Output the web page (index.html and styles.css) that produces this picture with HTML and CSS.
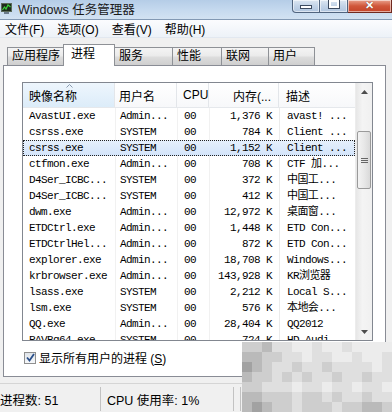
FILE: index.html
```html
<!DOCTYPE html>
<html lang="zh-CN">
<head>
  <meta charset="UTF-8" />
  <title>Windows 任务管理器</title>
  <link rel="stylesheet" href="styles.css">
</head>
<body>
  <div class="window">
    <!-- Title bar -->
    <div class="titlebar">
      <span class="app-icon">
        <svg width="11" height="11" viewBox="0 0 11 11">
          <rect x="0.5" y="0.5" width="10" height="8" fill="#1d2a1d" stroke="#5a6a5a"/>
          <polyline points="1.5,7 3.5,4 5,6 7,2 9.5,4" fill="none" stroke="#39d43a" stroke-width="1.2"/>
          <rect x="3" y="9" width="5" height="2" fill="#6b7b8c"/>
        </svg>
      </span>
      <span class="title">Windows 任务管理器</span>
      <div class="caption-btns">
        <span class="cbtn min"><i></i></span>
        <span class="cbtn max"><i></i></span>
        <span class="cbtn close">✕</span>
      </div>
    </div>

    <!-- Menu -->
    <div class="menubar">
      <span>文件(F)</span>
      <span>选项(O)</span>
      <span>查看(V)</span>
      <span>帮助(H)</span>
    </div>

    <div class="client">
      <div class="tabs">
        <span class="tab">应用程序</span>
        <span class="tab active">进程</span>
        <span class="tab">服务</span>
        <span class="tab">性能</span>
        <span class="tab">联网</span>
        <span class="tab">用户</span>
      </div>

      <div class="panel">
        <div class="listview">
          <div class="lv-main">
            <div class="lv-head">
              <span class="c-name sorted">
                <svg class="sort-arrow" width="7" height="4" viewBox="0 0 7 4"><polyline points="0.5,3.5 3.5,0.5 6.5,3.5" fill="none" stroke="#8a9bb0" stroke-width="1"/></svg>
                映像名称
              </span>
              <span class="c-user">用户名</span>
              <span class="c-cpu">CPU</span>
              <span class="c-mem">内存(...</span>
              <span class="c-desc">描述</span>
            </div>
            <div class="lv-body">
              <div class="row"><span class="c-name">AvastUI.exe</span><span class="c-user">Admin...</span><span class="c-cpu">00</span><span class="c-mem">1,376 K</span><span class="c-desc">avast! ...</span></div>
              <div class="row"><span class="c-name">csrss.exe</span><span class="c-user">SYSTEM</span><span class="c-cpu">00</span><span class="c-mem">784 K</span><span class="c-desc">Client ...</span></div>
              <div class="row selected"><span class="c-name">csrss.exe</span><span class="c-user">SYSTEM</span><span class="c-cpu">00</span><span class="c-mem">1,152 K</span><span class="c-desc">Client ...</span></div>
              <div class="row"><span class="c-name">ctfmon.exe</span><span class="c-user">Admin...</span><span class="c-cpu">00</span><span class="c-mem">708 K</span><span class="c-desc">CTF 加...</span></div>
              <div class="row"><span class="c-name">D4Ser_ICBC...</span><span class="c-user">SYSTEM</span><span class="c-cpu">00</span><span class="c-mem">372 K</span><span class="c-desc">中国工...</span></div>
              <div class="row"><span class="c-name">D4Ser_ICBC...</span><span class="c-user">SYSTEM</span><span class="c-cpu">00</span><span class="c-mem">412 K</span><span class="c-desc">中国工...</span></div>
              <div class="row"><span class="c-name">dwm.exe</span><span class="c-user">Admin...</span><span class="c-cpu">00</span><span class="c-mem">12,972 K</span><span class="c-desc">桌面窗...</span></div>
              <div class="row"><span class="c-name">ETDCtrl.exe</span><span class="c-user">Admin...</span><span class="c-cpu">00</span><span class="c-mem">1,448 K</span><span class="c-desc">ETD Con...</span></div>
              <div class="row"><span class="c-name">ETDCtrlHel...</span><span class="c-user">Admin...</span><span class="c-cpu">00</span><span class="c-mem">872 K</span><span class="c-desc">ETD Con...</span></div>
              <div class="row"><span class="c-name">explorer.exe</span><span class="c-user">Admin...</span><span class="c-cpu">00</span><span class="c-mem">18,708 K</span><span class="c-desc">Windows...</span></div>
              <div class="row"><span class="c-name">krbrowser.exe</span><span class="c-user">Admin...</span><span class="c-cpu">00</span><span class="c-mem">143,928 K</span><span class="c-desc">KR浏览器</span></div>
              <div class="row"><span class="c-name">lsass.exe</span><span class="c-user">SYSTEM</span><span class="c-cpu">00</span><span class="c-mem">2,212 K</span><span class="c-desc">Local S...</span></div>
              <div class="row"><span class="c-name">lsm.exe</span><span class="c-user">SYSTEM</span><span class="c-cpu">00</span><span class="c-mem">576 K</span><span class="c-desc">本地会...</span></div>
              <div class="row"><span class="c-name">QQ.exe</span><span class="c-user">Admin...</span><span class="c-cpu">00</span><span class="c-mem">28,404 K</span><span class="c-desc">QQ2012</span></div>
              <div class="row"><span class="c-name">RAVBg64.exe</span><span class="c-user">SYSTEM</span><span class="c-cpu">00</span><span class="c-mem">724 K</span><span class="c-desc">HD Audi...</span></div>
            </div>
          </div>
          <div class="scrollbar">
            <span class="sb-btn"><svg width="7" height="4" viewBox="0 0 7 4"><polygon points="0,4 3.5,0 7,4" fill="#4d4d4d"/></svg></span>
            <span class="sb-gap"></span>
            <span class="sb-thumb"><i></i><i></i><i></i></span>
            <span class="sb-track"></span>
            <span class="sb-btn"><svg width="7" height="4" viewBox="0 0 7 4"><polygon points="0,0 7,0 3.5,4" fill="#4d4d4d"/></svg></span>
          </div>
        </div>

        <label class="showall">
          <span class="chk">
            <svg width="9" height="9" viewBox="0 0 9 9"><polyline points="1,4.5 3.5,7.5 8,1" fill="none" stroke="#2a4f8a" stroke-width="1.8"/></svg>
          </span>
          <span class="showall-text">显示所有用户的进程 (<u>S</u>)</span>
        </label>
      </div>

      <div class="statusbar">
        <span class="sb-cell first">进程数: 51</span>
        <span class="sb-cell second">CPU 使用率: 1%</span>
        <span class="sb-cell"></span>
      </div>
    </div>

    <!-- pixelated watermark -->
    <div class="mosaic">
      <i class="c"></i><i class="c"></i><i class="b"></i><i class="d"></i><i class="d"></i><i class="e"></i><i class="e"></i><i class="d"></i><i class="e"></i><i class="e"></i><i class="d"></i><i class="e"></i><i class="e"></i><i class="e"></i><i class="e"></i>
      <i class="b"></i><i class="b"></i><i class="c"></i><i class="c"></i><i class="d"></i><i class="d"></i><i class="e"></i><i class="d"></i><i class="d"></i><i class="e"></i><i class="e"></i><i class="d"></i><i class="e"></i><i class="e"></i><i class="d"></i>
      <i class="a"></i><i class="b"></i><i class="c"></i><i class="d"></i><i class="d"></i><i class="c"></i><i class="d"></i><i class="d"></i><i class="c"></i><i class="d"></i><i class="d"></i><i class="d"></i><i class="d"></i><i class="e"></i><i class="d"></i>
      <i class="b"></i><i class="c"></i><i class="c"></i><i class="d"></i><i class="c"></i><i class="d"></i><i class="c"></i><i class="d"></i><i class="d"></i><i class="c"></i><i class="d"></i><i class="d"></i><i class="c"></i><i class="d"></i><i class="d"></i>
      <i class="c"></i><i class="c"></i><i class="d"></i><i class="d"></i><i class="d"></i><i class="e"></i><i class="d"></i><i class="d"></i><i class="e"></i><i class="d"></i><i class="d"></i><i class="e"></i><i class="d"></i><i class="d"></i><i class="e"></i>
      <i class="b"></i><i class="b"></i><i class="c"></i><i class="c"></i><i class="c"></i><i class="d"></i><i class="c"></i><i class="c"></i><i class="d"></i><i class="c"></i><i class="d"></i><i class="d"></i><i class="c"></i><i class="d"></i><i class="d"></i>
      <i class="b"></i><i class="a"></i><i class="b"></i><i class="c"></i><i class="c"></i><i class="d"></i><i class="c"></i><i class="c"></i><i class="c"></i><i class="d"></i><i class="c"></i><i class="c"></i><i class="b"></i><i class="b"></i><i class="c"></i>
    </div>
  </div>
</body>
</html>
```

FILE: styles.css
```css
* {
  box-sizing: border-box;
}
body {
  margin: 0;
  width: 392px;
  height: 412px;
  overflow: hidden;
  font-family: "Liberation Sans", "Noto Sans CJK SC", sans-serif;
  font-size: 12px;
  color: #000;
  background: #f0f0f0;
}
.window {
  position: relative;
  height: 412px;
}

/* Title bar */
.titlebar {
  height: 20px;
  display: flex;
  align-items: center;
  background: linear-gradient(#b5cde7, #c6daef 55%, #d2e2f2);
  border-bottom: 1px solid #8299b4;
}
.app-icon {
  display: flex;
  margin-left: 1px;
  margin-top: -2px;
}
.title {
  margin-left: 6px;
  margin-top: -3px;
  font-size: 12.5px;
  color: #1a1a1a;
}
.caption-btns {
  margin-left: auto;
  align-self: flex-start;
  display: flex;
}
.cbtn {
  height: 13px;
  border: 1px solid #51657f;
  border-top: none;
  background: linear-gradient(#dde7f2, #c2d3e7 50%, #b0c5de);
  box-shadow: inset 0 0 0 1px rgba(255,255,255,0.55);
  display: flex;
  align-items: center;
  justify-content: center;
}
.cbtn.min {
  width: 28px;
  border-radius: 0 0 0 4px;
}
.cbtn.min i {
  width: 12px;
  height: 4px;
  background: #fff;
  border: 1px solid #3d4b60;
  margin-top: 2px;
}
.cbtn.max {
  width: 28px;
  border-left: none;
}
.cbtn.max i {
  width: 10px;
  height: 8px;
  border: 2px solid #fff;
  outline: 1px solid #3d4b60;
  margin-top: -4px;
}
.cbtn.close {
  width: 44px;
  border-left: none;
  border-color: #6f2a20;
  background: linear-gradient(#e9a18d, #d0573b 50%, #c4442a);
  color: #fff;
  font-size: 11px;
  font-weight: bold;
  line-height: 1;
  text-shadow: 0 0 1px #4a120a;
  align-items: flex-start;
}

/* Menu bar */
.menubar {
  height: 18px;
  display: flex;
  align-items: center;
  padding-left: 5px;
  gap: 13px;
  background: linear-gradient(#fbfcfe, #edf2f8);
  border-bottom: 1px solid #e2e8f0;
}

/* Client area */
.client {
  padding-left: 3px;
}
.tabs {
  height: 27px;
  display: flex;
  align-items: flex-end;
  padding-left: 4px;
}
.tab {
  height: 18px;
  line-height: 17px;
  padding-left: 4px;
  border: 1px solid #8e9196;
  border-bottom: none;
  margin-right: -1px;
  background: linear-gradient(#f4f4f4, #ebebeb 45%, #dcdcdc 55%, #cfcfcf);
  white-space: nowrap;
}
.tab:nth-child(1) { width: 57px; }
.tab:nth-child(3) { width: 59px; }
.tab:nth-child(4) { width: 50px; }
.tab:nth-child(5) { width: 48px; }
.tab:nth-child(6) { width: 47px; }
.tab.active {
  width: 52px;
  height: 22px;
  padding-left: 7px;
  padding-top: 1px;
  margin-bottom: -1px;
  background: #fff;
  position: relative;
  z-index: 1;
}
.panel {
  width: 383px;
  height: 312px;
  border: 1px solid #898c95;
  background: #fff;
  padding: 16px 0 0 18px;
}

/* List view */
.listview {
  width: 351px;
  height: 259px;
  border: 1px solid #828790;
  display: flex;
}
.lv-main {
  width: 332px;
  overflow: hidden;
}
.lv-head {
  height: 25px;
  display: flex;
  align-items: center;
  background: linear-gradient(#fff, #f7f8fa);
  border-bottom: 1px solid #e5e8ec;
}
.lv-head span {
  height: 100%;
  display: flex;
  align-items: center;
  border-right: 1px solid #e3e6ea;
  font-size: 12px;
}
.lv-head .sorted {
  position: relative;
  background: linear-gradient(#eef6fd, #dcecf9);
}
.sort-arrow {
  position: absolute;
  top: 1px;
  left: 43px;
}
.lv-head .c-mem {
  justify-content: flex-end;
}
.lv-head .c-desc {
  border-right: none;
}
.c-name { width: 92px; padding-left: 6px; }
.c-user { width: 62px; padding-left: 4px; }
.c-cpu { width: 32px; padding-left: 6px; }
.c-mem { width: 70px; padding-right: 7px; text-align: right; }
.c-desc { width: 76px; padding-left: 7px; }

.row {
  height: 16px;
  line-height: 16px;
  display: flex;
  font-family: "Liberation Mono", "Noto Sans CJK SC", monospace;
  font-size: 11px;
  letter-spacing: -0.6px;
  white-space: nowrap;
}
.row span {
  overflow: hidden;
}
.row .c-user,
.row .c-cpu,
.row .c-mem {
  border-left: 1px solid #f1f1f1;
}
.row .c-desc {
  border-left: 1px solid #ebebeb;
}
.row.selected {
  background: linear-gradient(#e6f0fc, #d3e4fa);
  outline: 1px dotted #222;
  outline-offset: -1px;
}
.row.selected span {
  border-left-color: transparent;
}

/* Scrollbar */
.scrollbar {
  width: 17px;
  display: flex;
  flex-direction: column;
  background: linear-gradient(90deg, #e6e6e6, #f4f4f4 40%, #f0f0f0);
  border-left: 1px solid #ececec;
}
.sb-btn {
  height: 17px;
  display: flex;
  align-items: center;
  justify-content: center;
}
.sb-gap {
  height: 31px;
}
.sb-thumb {
  height: 58px;
  margin: 0 1px;
  border: 1px solid #9a9a9a;
  border-radius: 2px;
  background: linear-gradient(90deg, #f3f3f3, #e8e8e8 50%, #d9d9d9);
  display: flex;
  flex-direction: column;
  align-items: center;
  justify-content: center;
  gap: 1px;
}
.sb-thumb i {
  width: 7px;
  height: 1px;
  background: #666;
}
.sb-track {
  flex: 1;
}

/* Checkbox */
.showall {
  display: flex;
  align-items: center;
  gap: 3px;
  margin: 8px 0 0 2px;
  font-size: 12px;
}
.showall-text {
  white-space: nowrap;
}
.showall u {
  text-decoration: underline;
}
.chk {
  width: 12px;
  height: 12px;
  border: 1px solid #8f8f8f;
  background: linear-gradient(#dfe4ea, #f6f8fa);
  display: flex;
  align-items: center;
  justify-content: center;
}

/* Status bar */
.statusbar {
  margin-top: 6px;
  margin-left: -3px;
  height: 28px;
  border-top: 1px solid #d5d5d5;
  padding-top: 3px;
  display: flex;
}
.sb-cell {
  display: flex;
  align-items: center;
  border-right: 1px solid #c2c2c2;
  padding-left: 6px;
  font-size: 12.5px;
}
.sb-cell.first {
  width: 101px;
  padding-left: 0;
}
.sb-cell.second {
  width: 133px;
}

/* Mosaic watermark */
.mosaic {
  position: absolute;
  left: 242px;
  top: 342px;
  display: grid;
  grid-template-columns: repeat(15, 10px);
  grid-template-rows: repeat(7, 10px);
}
.mosaic .a { background: #a2a2a2; }
.mosaic .b { background: #bababa; }
.mosaic .c { background: #cecece; }
.mosaic .d { background: #dfdfdf; }
.mosaic .e { background: #ececec; }
```
